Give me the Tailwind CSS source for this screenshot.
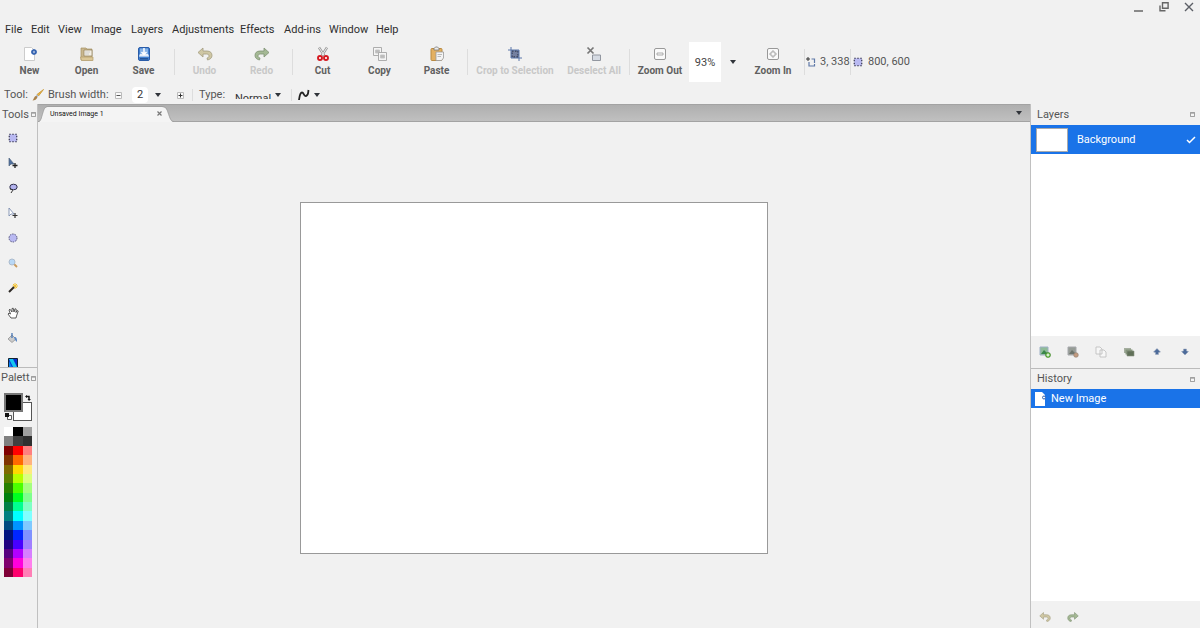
<!DOCTYPE html>
<html lang="en">
<head>
<meta charset="utf-8">
<meta name="viewport" content="width=device-width, initial-scale=1">
<title>Image editor</title>
<script src="https://cdn.jsdelivr.net/npm/@tailwindcss/browser@4"></script>
</head>
<body class="flex h-screen flex-col overflow-hidden bg-[#f1f1f1] font-['Roboto',sans-serif] text-[11px] leading-4 text-[#555]">
<svg class="hidden" aria-hidden="true">
  <defs>
    <symbol id="undo" viewBox="0 0 16 16"><path d="M1 6.500 6 2v3h4c3.500 0 5 2 5 4.500 0 2-1.500 4-4.500 4.500l-.5-2c1.500-.4 2-1 2-2 0-1.300-1-2-2.500-2H6v3z" fill="#cfc7a4" stroke="#a39d80" stroke-width=".8"/></symbol>
    <symbol id="redo" viewBox="0 0 16 16"><path d="M15 6.500 10 2v3H6C2.500 5 1 7 1 9.500c0 2 1.500 4 4.500 4.500l.5-2c-1.500-.4-2-1-2-2 0-1.300 1-2 2.500-2H10v3z" fill="#a4b894" stroke="#7f9273" stroke-width=".8"/></symbol>
    <symbol id="select" viewBox="0 0 16 16"><path d="M3 3h10v10H3z" fill="#b9b9f2" stroke="#33334d" stroke-width="1.600" stroke-dasharray="2 2"/></symbol>
    <symbol id="dock" viewBox="0 0 6 6"><path d="M.5.500h5v5h-5z" fill="#f5f5f5" stroke="#888"/><path d="M1 1.500h4" stroke="#999"/></symbol>
    <symbol id="caret" viewBox="0 0 6 4"><path d="M0 0h6L3 4z" fill="#30343a"/></symbol>
  </defs>
</svg>

<header class="flex h-[104px] shrink-0 flex-col">
  <div class="flex h-5 items-start justify-end gap-[15px] pt-0.5 pr-1.5">
    <button aria-label="Minimize" class="w-2.5"><svg viewBox="0 0 10 10" class="size-2.5"><path d="M0 9h9" stroke="#666" stroke-width="1.500"/></svg></button>
    <button aria-label="Restore" class="w-2.5"><svg viewBox="0 0 10 10" class="size-2.5" fill="none" stroke="#666" stroke-width="1.400"><path d="M3.500.800h5.600v5.400H3.500zM1 3.500v5.300h5.500"/></svg></button>
    <button aria-label="Close" class="w-2.5"><svg viewBox="0 0 10 10" class="size-2.5"><path d="m1 1 8 8M9 1 1 9" stroke="#5c5f66" stroke-width="1.400"/></svg></button>
  </div>
  <nav class="grid h-5 grid-cols-[26px_27px_33px_40px_41px_68px_44px_45px_47px_auto] content-center justify-start pl-[5px] text-left text-[#2f2f2f]">
    <button class="text-left">File</button><button class="text-left">Edit</button><button class="text-left">View</button><button class="text-left">Image</button><button class="text-left">Layers</button><button class="text-left">Adjustments</button><button class="text-left">Effects</button><button class="text-left">Add-ins</button><button class="text-left">Window</button><button class="text-left">Help</button>
  </nav>

  <div class="flex h-11 items-center whitespace-nowrap pl-px">
    <button class="flex w-[57px] flex-col items-center pt-px text-[10px] font-bold text-[#606060]"><svg viewBox="0 0 16 16" class="mb-px size-4"><path d="M2.500 1.500h7l3 3v10h-10z" fill="#fff" stroke="#ccc"/><circle cx="12" cy="6" r="2" fill="#fff" stroke="#2f5fae" stroke-width="1.600"/><path d="M12 3v6M9 6h6" stroke="#2f5fae" stroke-width=".6"/></svg>New</button>
    <button class="flex w-[57px] flex-col items-center pt-px text-[10px] font-bold text-[#606060]"><svg viewBox="0 0 16 16" class="mb-px size-4"><path d="M2 2h5l1 1h5v11H2z" fill="#c9b78e" stroke="#a58f61" stroke-width=".7"/><path d="M5 4h8v6H5z" fill="#f3efe4" stroke="#8f7f59" stroke-width=".7"/><path d="M6 6h5M6 8h4" stroke="#ccc"/><path d="M1.500 11H14v3.500H2.500z" fill="#dbc797" stroke="#b29b69" stroke-width=".7"/></svg>Open</button>
    <button class="flex w-[57px] flex-col items-center pt-px text-[10px] font-bold text-[#606060]"><svg viewBox="0 0 16 16" class="mb-px size-4"><rect x="2.500" y="1.500" width="11" height="13" rx="1.500" fill="#3f7fd0" stroke="#2a5ca8"/><path d="M4 2.500h8v5l1 3H3l1-3z" fill="#86b2e6"/><path d="M4 8h8l1 2.500H3z" fill="#e6eef8"/><path d="M8 2v6M5.500 6 8 8.500 10.500 6" fill="none" stroke="#fff" stroke-width="1.500"/><path d="M4 12.800h8" stroke="#24508f" stroke-width="1.400"/></svg>Save</button>
    <div class="flex w-1 justify-center"><div class="h-[26px] w-px bg-[#ddd]"></div></div>
    <button disabled class="flex w-[57px] flex-col items-center pt-px text-[10px] font-bold text-[#c8c8c8]"><svg class="mb-px size-4"><use href="#undo"/></svg>Undo</button>
    <button disabled class="flex w-[57px] flex-col items-center pt-px text-[10px] font-bold text-[#c8c8c8]"><svg class="mb-px size-4"><use href="#redo"/></svg>Redo</button>
    <div class="flex w-1 justify-center"><div class="h-[26px] w-px bg-[#ddd]"></div></div>
    <button class="flex w-[57px] flex-col items-center pt-px text-[10px] font-bold text-[#606060]"><svg viewBox="0 0 16 16" class="mb-px size-4"><path d="M4 1.500 9.500 10M12 1.500 6.500 10" stroke="#999" stroke-width="2.400"/><path d="M4 1.500 9.500 10M12 1.500 6.500 10" stroke="#eee" stroke-width="1"/><circle cx="5" cy="12" r="2" fill="#fff" stroke="#d51920" stroke-width="1.900"/><circle cx="11" cy="12" r="2" fill="#fff" stroke="#d51920" stroke-width="1.900"/></svg>Cut</button>
    <button class="flex w-[57px] flex-col items-center pt-px text-[10px] font-bold text-[#606060]"><svg viewBox="0 0 16 16" class="mb-px size-4" stroke="#a5a5a5" stroke-width=".9"><path d="M1.500 1.500h8v8h-8z" fill="#f5f5f5"/><path d="M3.500 4h4v3h-4z" fill="#bbb" stroke="#c4c4c4"/><path d="M6.500 6.500h8v8h-8z" fill="#f5f5f5"/><path d="M8.500 9h4v3h-4z" fill="#bbb" stroke="#c4c4c4"/></svg>Copy</button>
    <button class="flex w-[57px] flex-col items-center pt-px text-[10px] font-bold text-[#606060]"><svg viewBox="0 0 16 16" class="mb-px size-4"><rect x="2" y="2.500" width="11" height="12" rx="1" fill="#e3b061" stroke="#b98a42"/><path d="M5 4V2.500l1.500-1.500h2L10 2.500V4z" fill="#eee" stroke="#777" stroke-width=".8"/><path d="M7 6h7.500v6l-2 2.500H7z" fill="#f4f4f4" stroke="#999" stroke-width=".8"/><path d="M8.500 8.500H13M8.500 10.500H12" stroke="#aaa" stroke-width=".8"/></svg>Paste</button>
    <div class="flex w-1 justify-center"><div class="h-[26px] w-px bg-[#ddd]"></div></div>
    <button disabled class="flex w-[92px] flex-col items-center pt-px text-[10px] font-bold text-[#c8c8c8]"><svg viewBox="0 0 16 16" class="mb-px size-4"><path d="M4 4h8v8H4z" fill="#7480a0"/><path d="M5 5h6v6H5z" fill="none" stroke="#343c54" stroke-width="1.300" stroke-dasharray="1.500 1.500"/><path d="M4 1v11h11M1 4h11v11" fill="none" stroke="#5a77aa"/></svg>Crop to Selection</button>
    <button disabled class="flex w-[66px] flex-col items-center pt-px text-[10px] font-bold text-[#c8c8c8]"><svg viewBox="0 0 16 16" class="mb-px size-4"><path d="m1.500 1.500 6 6m0-6-6 6" stroke="#777" stroke-width="1.700"/><path d="M6.500 9h8v5.500h-8z" fill="#d6dbe3" stroke="#9297a0"/></svg>Deselect All</button>
    <div class="flex w-1 justify-center"><div class="h-[26px] w-px bg-[#ddd]"></div></div>
    <button class="flex w-[58px] flex-col items-center pt-px text-[10px] font-bold text-[#606060]"><svg viewBox="0 0 16 16" class="mb-px size-4" fill="#fafafa" stroke="#999"><rect x="2.500" y="2.500" width="11" height="11" rx="1.500"/><path d="M5 7h6v2H5z" stroke-width=".8"/></svg>Zoom Out</button>
    <input aria-label="Zoom level" value="93%" class="h-10 w-8 bg-white text-center text-[#444]">
    <button aria-label="Zoom presets" class="flex w-[23px] justify-center"><svg class="h-1 w-1.5"><use href="#caret"/></svg></button>
    <button class="flex w-[58px] flex-col items-center pt-px text-[10px] font-bold text-[#606060]"><svg viewBox="0 0 16 16" class="mb-px size-4" fill="#fafafa" stroke="#999"><rect x="2.500" y="2.500" width="11" height="11" rx="1.500"/><path d="M7 5h2v2h2v2H9v2H7V9H5V7h2z" stroke-width=".8"/></svg>Zoom In</button>
    <div class="flex w-1 justify-center"><div class="h-[26px] w-px bg-[#ddd]"></div></div>
    <svg viewBox="0 0 10 10" class="mr-1 size-2.5"><path d="M2 0v4M0 2h4" stroke="#333"/><path d="M5.500 2H8.500v4M8.500 7v2H3V5" fill="none" stroke="#5f79a8" stroke-width="1.200"/></svg>
    <span class="w-7">3, 338</span>
    <div class="mr-px ml-0.5 h-[26px] w-px bg-[#ddd]"></div>
    <svg class="mr-1 size-3"><use href="#select"/></svg>
    <span>800, 600</span>
  </div>

  <div class="flex h-5 items-center whitespace-nowrap pt-0.5 pl-1">
    <span class="w-7">Tool:</span>
    <button aria-label="Paintbrush" class="mr-1"><svg viewBox="0 0 12 12" class="size-3"><path d="M11.500.500 5 5.500 6.500 7z" fill="#eeb63d" stroke="#c99a3a" stroke-width=".9"/><path d="m5 5.500 1.500 1.500-1.500 1L4 7z" fill="#9bb2d3"/><path d="M4.200 6.800 5.500 8c-.5 2.500-3 3.500-5 3.500C2 10 2 7.500 4.200 6.800z" fill="#a9814a"/></svg></button>
    <label for="brush" class="w-[67px]">Brush width:</label>
    <button aria-label="Decrease width" class="mr-2.5"><svg viewBox="0 0 7 7" class="size-[7px]"><path d="M.5.500h6v6h-6z" fill="#fafafa" stroke="#bbb"/><path d="M1.500 3.500h4" stroke="#555"/></svg></button>
    <input id="brush" value="2" class="h-4 w-4 rounded-sm bg-white text-center text-[#333]">
    <button aria-label="Width presets" class="mr-4 ml-[7px]"><svg class="h-1 w-1.5"><use href="#caret"/></svg></button>
    <button aria-label="Increase width" class="mr-2"><svg viewBox="0 0 7 7" class="size-[7px]"><path d="M.5.500h6v6h-6z" fill="#fafafa" stroke="#bbb"/><path d="M1.500 3.500h4m-2-2v4" stroke="#333"/></svg></button>
    <div class="mr-1.5 h-3 w-px bg-[#ddd]"></div>
    <label for="mode" class="w-9">Type:</label>
    <div class="h-2 w-10 overflow-hidden"><select id="mode" class="h-4 w-10 appearance-none leading-4 text-[#333]"><option>Normal</option></select></div>
    <svg class="mr-2.5 h-1 w-1.5"><use href="#caret"/></svg>
    <div class="mr-1.5 h-3 w-px bg-[#ddd]"></div>
    <button aria-label="Curve type" class="flex items-center gap-1"><svg viewBox="0 0 12 12" class="size-3"><path d="M1 11c.5-4 1-7.500 3-7.500s1.500 4 4 3.500 2-3 2.500-6" fill="none" stroke="#222" stroke-width="1.800"/></svg><svg class="h-1 w-1.5"><use href="#caret"/></svg></button>
  </div>
</header>

<div class="flex min-h-0 flex-1">
  <aside class="flex w-[37px] shrink-0 flex-col overflow-hidden">
    <h2 class="flex h-[21px] shrink-0 items-center justify-between pr-px pl-0.5">Tools<svg class="size-[5px]"><use href="#dock"/></svg></h2>
    <div class="flex h-[242px] shrink-0 flex-col overflow-hidden pl-1.5">
      <button aria-label="Rectangle select" class="flex h-[25px] w-[13px] shrink-0 items-center justify-center"><svg class="size-3"><use href="#select"/></svg></button>
      <button aria-label="Move selected" class="flex h-[25px] w-[13px] shrink-0 items-center justify-center"><svg viewBox="0 0 10 10" class="size-2.5"><path d="M1 0v8l2-2 3 0z" fill="#4f6f9e" stroke="#506580" stroke-width=".7"/><path d="M7 5v5M4.500 7.500h5" stroke="#222" stroke-width="1.300"/></svg></button>
      <button aria-label="Lasso select" class="flex h-[25px] w-[13px] shrink-0 items-center justify-center"><svg viewBox="0 0 10 10" class="size-2.5"><ellipse cx="5.500" cy="4" rx="3.700" ry="2.800" fill="#b3b3ef" stroke="#333350"/><path d="M2 5.500c0 2 3 0 2.500 2.200L3 10" fill="none" stroke="#333"/></svg></button>
      <button aria-label="Move selection" class="flex h-[25px] w-[13px] shrink-0 items-center justify-center"><svg viewBox="0 0 10 10" class="size-2.5"><path d="M1 0v8l2-2 3 0z" fill="#fff" stroke="#7083a8" stroke-width=".8"/><path d="M7 5v5M4.500 7.500h5" stroke="#333" stroke-width="1.200"/></svg></button>
      <button aria-label="Ellipse select" class="flex h-[25px] w-[13px] shrink-0 items-center justify-center"><svg viewBox="0 0 10 10" class="size-2.5"><circle cx="5" cy="5" r="4" fill="#b9b9f2" stroke="#555577" stroke-dasharray="1.500 1"/></svg></button>
      <button aria-label="Zoom" class="flex h-[25px] w-[13px] shrink-0 items-center justify-center"><svg viewBox="0 0 10 10" class="size-2.5"><path d="m6 6 3 3" stroke="#c99a5b" stroke-width="1.800"/><circle cx="4" cy="4" r="3" fill="#b8d8f6" stroke="#adbccd"/></svg></button>
      <button aria-label="Magic wand" class="flex h-[25px] w-[13px] shrink-0 items-center justify-center"><svg viewBox="0 0 10 10" class="size-2.5"><path d="M7 0v6M4.500 3H10M5 1l4 4M9 1 5 5" stroke="#f3c233"/><path d="m1 9 5-5" stroke="#2d2925" stroke-width="2"/></svg></button>
      <button aria-label="Pan" class="flex h-[25px] w-[13px] shrink-0 items-center justify-center"><svg viewBox="0 0 12 12" class="size-3"><path d="M4 11 1 7l1-1 1.500 1L2 3l1-.8L5 5V1.500l1.200-.3L7 5l1-3.300 1.200.5L9 5.500l1.200-2 1 .5L9.500 9 9 11z" fill="#fff" stroke="#333" stroke-width=".8"/></svg></button>
      <button aria-label="Paint bucket" class="flex h-[25px] w-[13px] shrink-0 items-center justify-center"><svg viewBox="0 0 10 10" class="size-2.5"><path d="m0 6 4-4 4 4-4 3.500z" fill="#ccc" stroke="#888" stroke-width=".7"/><path d="M4 0v5" stroke="#4777b6" stroke-width="1.300"/><path d="M6 4c3 0 3 2 3 5L7 7z" fill="#5a87c4"/></svg></button>
      <button aria-label="Gradient" class="flex h-[25px] w-[13px] shrink-0 items-center justify-center"><svg viewBox="0 0 10 10" class="size-2.5"><path d="M.5.500h9v9h-9z" fill="#0a2fd0" stroke="#123"/><path d="M1 1h4l4 8H5z" fill="#17c7f0"/><path d="M1 3v6h3z" fill="#0a80f0"/></svg></button>
    </div>
    <h2 class="flex h-[21px] shrink-0 items-center justify-between border-t border-[#bbb] pr-px pl-px">Palett<svg class="size-[5px]"><use href="#dock"/></svg></h2>
    <div class="relative mt-[5px] ml-1 h-7 w-7 shrink-0">
      <button aria-label="Secondary color" class="absolute right-0 bottom-0 size-[19px] border border-[#555] bg-white"></button>
      <button aria-label="Primary color" class="absolute top-0 left-0 size-[19px] border-2 border-[#777] bg-black"></button>
      <button aria-label="Swap colors" class="absolute top-0.5 right-px"><svg viewBox="0 0 6 6" class="size-1.5"><path d="M1 1.500h3v3" fill="none" stroke="#111" stroke-width="1.500"/><path d="m0 1.500 2-1.500v3zM4 6 2.500 4H6z" fill="#111"/></svg></button>
      <button aria-label="Reset colors" class="absolute bottom-px left-px"><svg viewBox="0 0 7 7" class="size-[7px]"><path d="M2.500 2.500h4v4h-4z" fill="#fff" stroke="#333" stroke-width=".8"/><path d="M0 0h4v4H0z" fill="#111"/></svg></button>
    </div>
    <div id="swatches" class="mt-1.5 ml-1 grid h-[150px] w-7 shrink-0 grid-cols-3"></div>
  </aside>

  <main class="flex min-w-0 flex-1 flex-col border-x border-[#c0c0c0]">
    <div class="flex h-[18px] shrink-0 items-center justify-between border-t border-b border-[#a3a3a3] bg-linear-to-b from-[#afafaf] to-[#c0c0c0] pr-2">
      <div class="relative flex h-4 w-[136px] items-center justify-between pt-px pr-3 pl-3 text-[7px] text-[#111]">
        <svg viewBox="0 0 136 17" preserveAspectRatio="none" class="absolute top-0 left-0 h-[17px] w-full"><path d="M0 17c3 0 3-3 5-9 1-4 2-6 5-6h114c4 0 5 3 6 6 2 6 3 9 6 9z" fill="#f4f4f4"/><path d="M0 16.500c3 0 3-3 5-9C6 4 7 1.500 10 1.500h114c4 0 5 3 6 6 2 6 3 9 6 9" fill="none" stroke="#999" stroke-width=".7"/></svg>
        <button class="relative">Unsaved Image 1</button>
        <button aria-label="Close tab" class="relative"><svg viewBox="0 0 5 5" class="size-[5px]"><path d="m.5.500 4 4m0-4-4 4" stroke="#777" stroke-width="1.200"/></svg></button>
      </div>
      <button aria-label="Open images"><svg class="h-1 w-1.5"><use href="#caret"/></svg></button>
    </div>
    <div class="flex min-h-0 flex-1 items-center justify-center pt-1.5">
      <div class="aspect-4/3 w-[47.200%] border border-[#999] bg-white"></div>
    </div>
  </main>

  <aside class="flex w-[169px] shrink-0 flex-col">
    <section class="flex h-[264px] shrink-0 flex-col">
      <h2 class="flex h-[21px] shrink-0 items-center justify-between pr-[5px] pl-1.5">Layers<svg class="size-[5px]"><use href="#dock"/></svg></h2>
      <div class="flex-1 bg-white">
        <label class="flex h-[29px] items-center bg-[#1a73e8] pr-1 pl-[5px] text-white">
          <span class="mr-[9px] h-6 w-8 border border-[#aaa] bg-white"></span>
          <span class="flex-1">Background</span>
          <span class="relative size-2.5"><input type="checkbox" checked aria-label="Show Background" class="absolute inset-0 size-2.5 appearance-none"><svg viewBox="0 0 10 10" class="absolute inset-0 size-2.5"><path d="m1 5 2.500 2.500L9 2" fill="none" stroke="#fff" stroke-width="1.500"/></svg></span>
        </label>
      </div>
      <div class="flex h-8 items-center gap-4 pl-2">
        <button aria-label="Add layer"><svg viewBox="0 0 12 12" class="size-3"><path d="M1 1h8v8H1z" fill="#8fbc98" stroke="#9fb0c6"/><path d="m2 8 3-4 4 4z" fill="#39864a"/><circle cx="9" cy="9" r="2.500" fill="#5fb83c" stroke="#3c7d26" stroke-width=".6"/><path d="M9 7.500v3M7.500 9h3" stroke="#fff"/></svg></button>
        <button aria-label="Delete layer"><svg viewBox="0 0 12 12" class="size-3"><path d="M1 1h8v8H1z" fill="#969c96" stroke="#a6a8ac"/><path d="m2 8 3-4 4 4z" fill="#6c746c"/><circle cx="9" cy="9" r="2.300" fill="#c29b80" stroke="#8f7a6b" stroke-width=".6"/></svg></button>
        <button aria-label="Duplicate layer"><svg viewBox="0 0 12 12" class="size-3"><path d="M1 1h4l2 2v5H1zM5 4h4l2 2v5H5z" fill="#f7f7f7" stroke="#bbb" stroke-width=".8"/></svg></button>
        <button aria-label="Merge layer"><svg viewBox="0 0 12 12" class="size-3"><path d="M1 2h7v5H1z" fill="#a5ae9f"/><path d="M2.500 3.500h7v5h-7z" fill="#83947a"/><path d="M4 5h7v5H4z" fill="#607058" stroke="#8c9685" stroke-width=".6"/></svg></button>
        <button aria-label="Move layer up"><svg viewBox="0 0 12 12" class="size-3"><path d="M6 2.500 9.500 6l-2 .5v2h-3v-2l-2-.5z" fill="#4d6b9a" stroke="#9aa7ba" stroke-width=".5"/></svg></button>
        <button aria-label="Move layer down"><svg viewBox="0 0 12 12" class="size-3"><path d="M6 9 9.500 5.500l-2-.5V3h-3v2l-2 .5z" fill="#4d6b9a" stroke="#9aa7ba" stroke-width=".5"/></svg></button>
      </div>
    </section>
    <section class="flex min-h-0 flex-1 flex-col border-t border-[#bbb]">
      <h2 class="flex h-5 shrink-0 items-center justify-between pr-[5px] pl-1.5">History<svg class="size-[5px]"><use href="#dock"/></svg></h2>
      <div class="flex-1 bg-white">
        <button class="flex h-[19px] w-full items-center gap-1 bg-[#1a73e8] pl-0.5 text-white"><svg viewBox="0 0 14 14" class="size-3.5"><path d="M2 0h7l3 3v11H2z" fill="#fff"/><circle cx="11" cy="5.500" r="1.500" fill="#fff" stroke="#2f5fae"/></svg>New Image</button>
      </div>
      <div class="flex h-[27px] shrink-0 items-center gap-4 pt-1 pl-2">
        <button aria-label="Undo"><svg class="size-3"><use href="#undo"/></svg></button>
        <button aria-label="Redo"><svg class="size-3"><use href="#redo"/></svg></button>
      </div>
    </section>
  </aside>
</div>
<script>
const colors = `fff 000 a0a0a0 808080 404040 303030 7f0000 f00 ff7f7f 7f3300 ff6a00 ffb27f 7f6a00 ffd800 ffe97f 5b7f00 b6ff00 daff7f
267f00 4cff00 a5ff7f 007f0e 00ff21 7fff8e 007f46 00ff90 7fffc5 007f7f 0ff 7fffff 004a7f 0094ff 7fc9ff 00137f 0026ff 7f92ff
21007f 4800ff a17fff 57007f b200ff d67fff 7f006e ff00dc ff7fed 7f0037 ff006e ff7fb6`.split(/\s+/);
for (const c of colors) {
  const b = document.createElement('button');
  b.setAttribute('aria-label', 'Color #' + c);
  b.style.backgroundColor = '#' + c;
  document.getElementById('swatches').append(b);
}
</script>
</body>
</html>
